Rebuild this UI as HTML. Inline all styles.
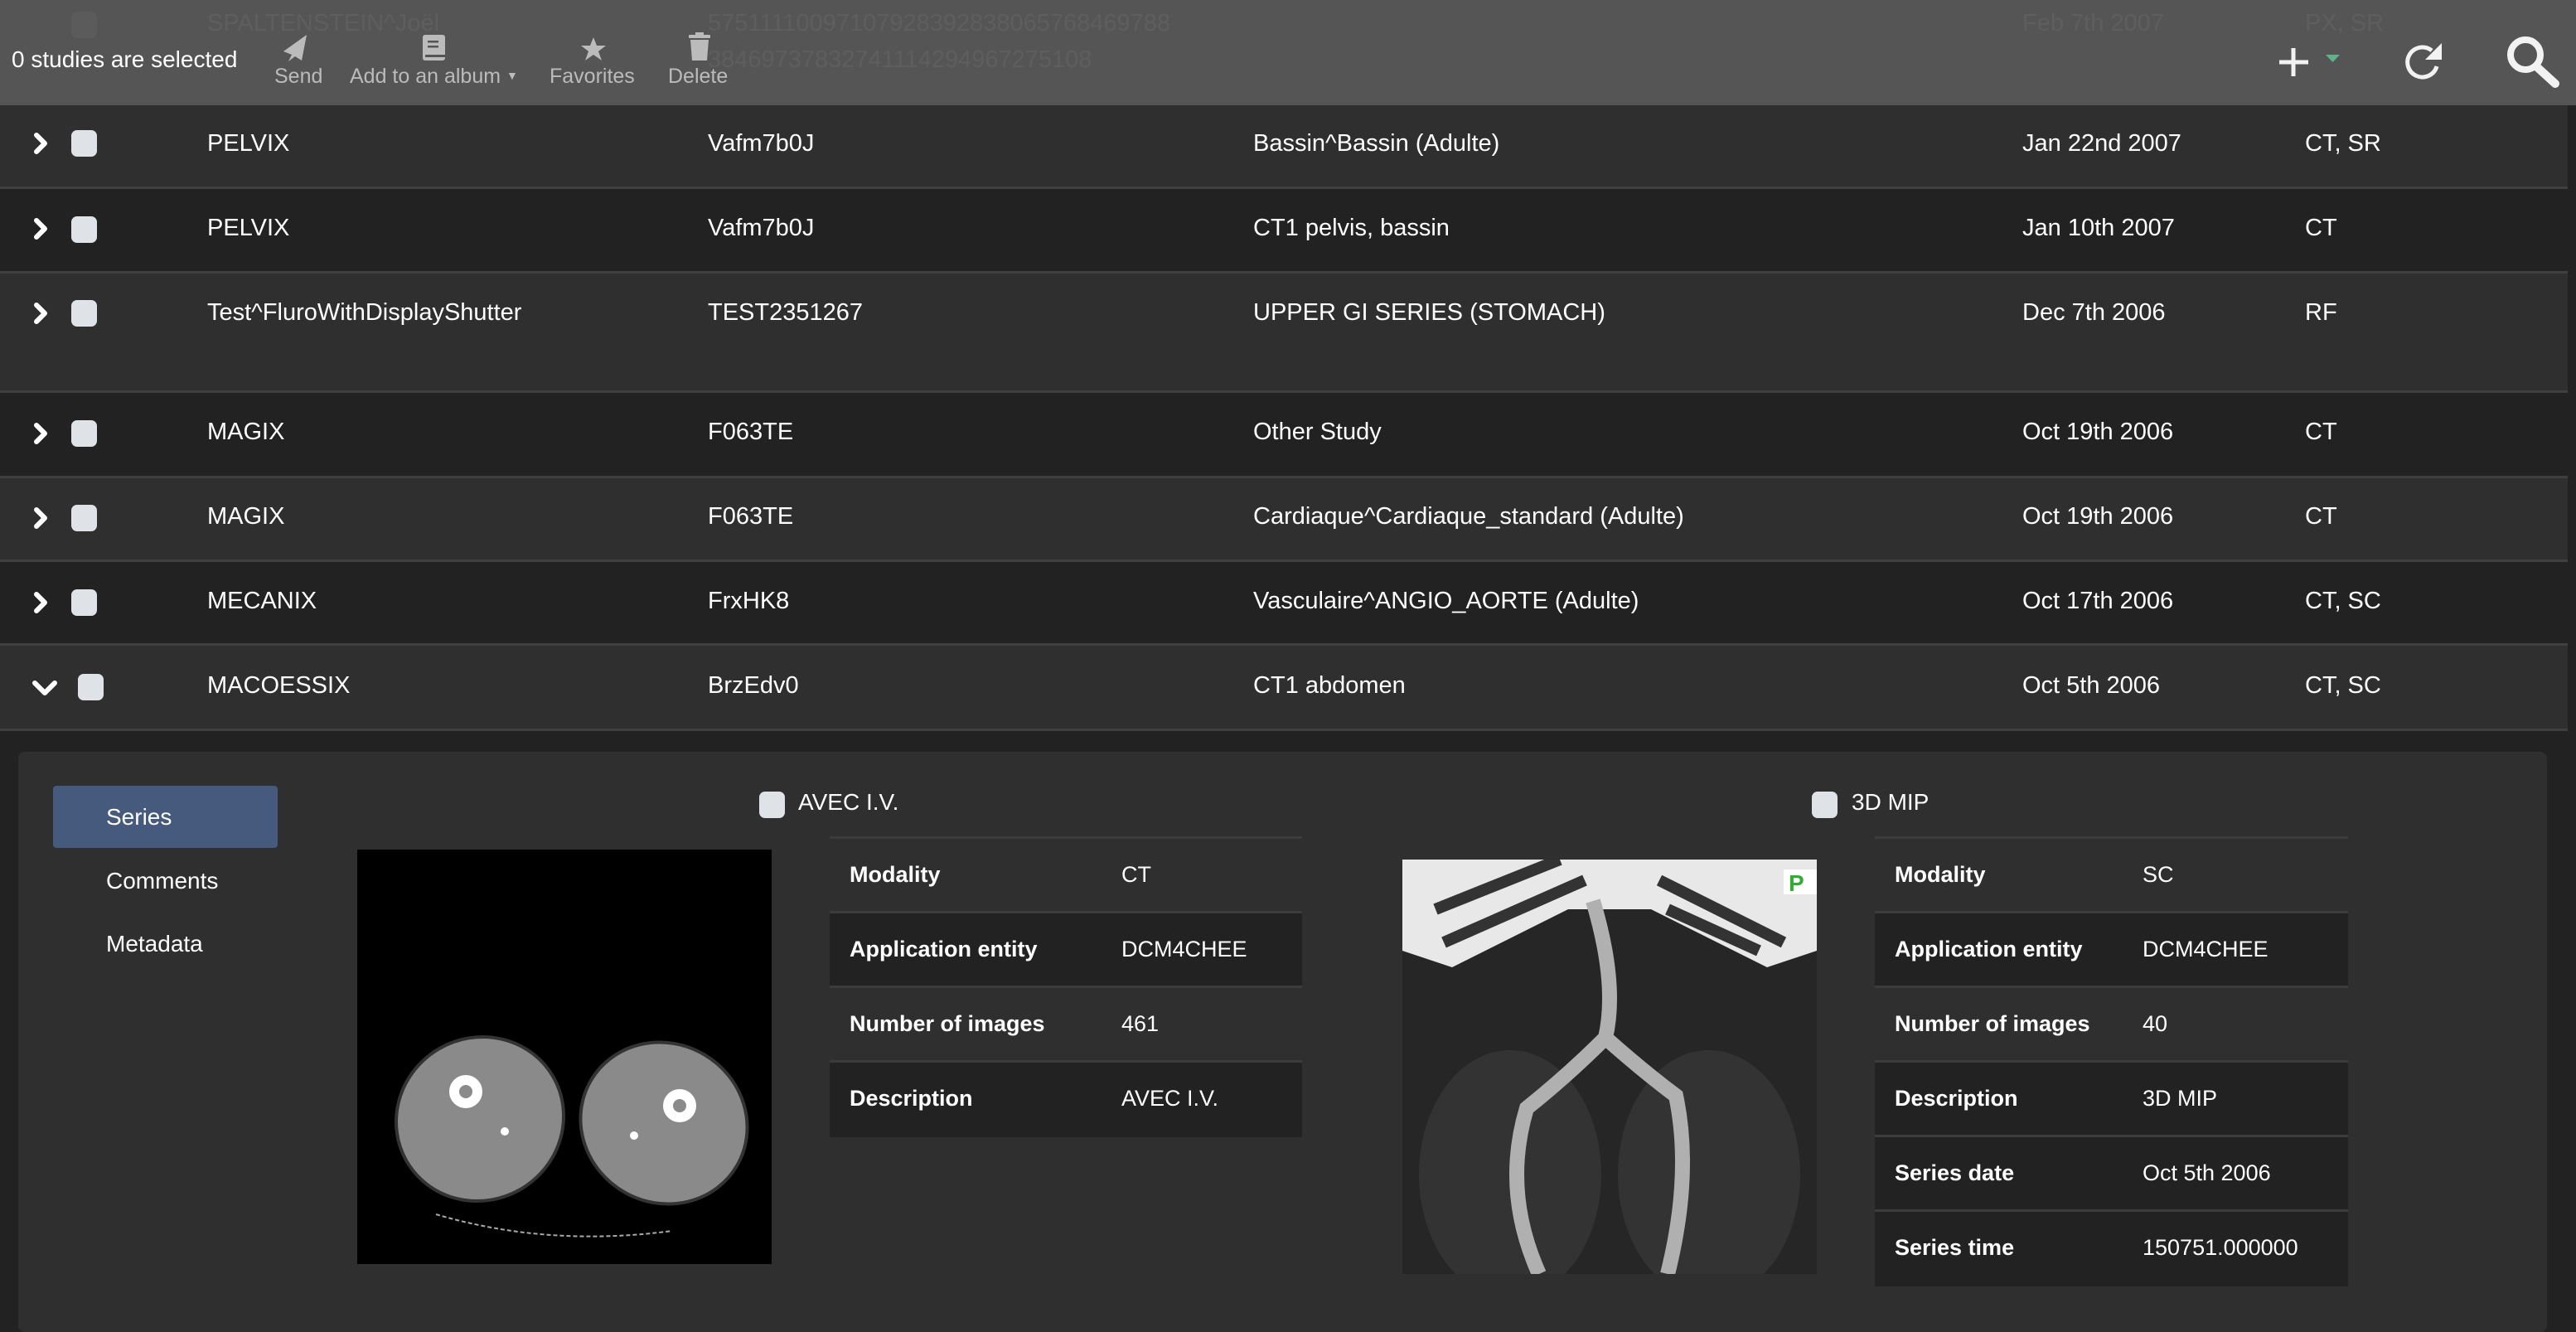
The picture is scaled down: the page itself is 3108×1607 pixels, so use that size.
<!DOCTYPE html>
<html><head><meta charset="utf-8"><style>
*{box-sizing:border-box;margin:0;padding:0}
body{width:3108px;height:1592px;background:#222;overflow:hidden;position:relative;font-family:"Liberation Sans",sans-serif;color:#fff}
.a{position:absolute;white-space:nowrap}
.row{position:absolute;left:0;width:3098px;border-bottom:3px solid #404040}
.l{background:#2f2f2f}.d{background:#222}
.t{position:absolute;font-size:29px;line-height:32px}
.cb{position:absolute;width:31px;height:32px;border-radius:7px;background:#dfe2e6}
.tb{position:absolute;border-top:3px solid #3c3c3c}
.tr{height:90px;border-bottom:3px solid #3c3c3c;position:relative;font-size:27px}
.tr b{position:absolute;top:28px}
.tr span{position:absolute;top:28px}
</style></head><body>
<div class="row l" style="top:0;height:127px"></div>
<div class="row l" style="top:127px;height:101px"></div>
<div class="row d" style="top:228px;height:102px"></div>
<div class="row l" style="top:330px;height:144px"></div>
<div class="row d" style="top:474px;height:103px"></div>
<div class="row l" style="top:577px;height:101px"></div>
<div class="row d" style="top:678px;height:101px"></div>
<div class="row l" style="top:779px;height:103px"></div>

<svg class="a" style="left:0;top:0" width="3108" height="882">
<g fill="none" stroke="#fff" stroke-width="6" stroke-linecap="round" stroke-linejoin="round">
<path d="M44 163 L54 173 L44 183"/>
<path d="M44 266 L54 276 L44 286"/>
<path d="M44 368 L54 378 L44 388"/>
<path d="M44 513 L54 523 L44 533"/>
<path d="M44 615 L54 625 L44 635"/>
<path d="M44 717 L54 727 L44 737"/>
<path d="M42 824 L54 836 L66 824"/>
</g>
</svg>
<div class="cb" style="left:86px;top:157px"></div>
<div class="cb" style="left:86px;top:261px"></div>
<div class="cb" style="left:86px;top:362px"></div>
<div class="cb" style="left:86px;top:507px"></div>
<div class="cb" style="left:86px;top:609px"></div>
<div class="cb" style="left:86px;top:711px"></div>
<div class="cb" style="left:94px;top:813px"></div>

<div class="t" style="left:250px;top:157px">PELVIX</div><div class="t" style="left:854px;top:157px">Vafm7b0J</div><div class="t" style="left:1512px;top:157px">Bassin^Bassin (Adulte)</div><div class="t" style="left:2440px;top:157px">Jan 22nd 2007</div><div class="t" style="left:2781px;top:157px">CT, SR</div>
<div class="t" style="left:250px;top:259px">PELVIX</div><div class="t" style="left:854px;top:259px">Vafm7b0J</div><div class="t" style="left:1512px;top:259px">CT1 pelvis, bassin</div><div class="t" style="left:2440px;top:259px">Jan 10th 2007</div><div class="t" style="left:2781px;top:259px">CT</div>
<div class="t" style="left:250px;top:361px">Test^FluroWithDisplayShutter</div><div class="t" style="left:854px;top:361px">TEST2351267</div><div class="t" style="left:1512px;top:361px">UPPER GI SERIES (STOMACH)</div><div class="t" style="left:2440px;top:361px">Dec 7th 2006</div><div class="t" style="left:2781px;top:361px">RF</div>
<div class="t" style="left:250px;top:505px">MAGIX</div><div class="t" style="left:854px;top:505px">F063TE</div><div class="t" style="left:1512px;top:505px">Other Study</div><div class="t" style="left:2440px;top:505px">Oct 19th 2006</div><div class="t" style="left:2781px;top:505px">CT</div>
<div class="t" style="left:250px;top:607px">MAGIX</div><div class="t" style="left:854px;top:607px">F063TE</div><div class="t" style="left:1512px;top:607px">Cardiaque^Cardiaque_standard (Adulte)</div><div class="t" style="left:2440px;top:607px">Oct 19th 2006</div><div class="t" style="left:2781px;top:607px">CT</div>
<div class="t" style="left:250px;top:709px">MECANIX</div><div class="t" style="left:854px;top:709px">FrxHK8</div><div class="t" style="left:1512px;top:709px">Vasculaire^ANGIO_AORTE (Adulte)</div><div class="t" style="left:2440px;top:709px">Oct 17th 2006</div><div class="t" style="left:2781px;top:709px">CT, SC</div>
<div class="t" style="left:250px;top:811px">MACOESSIX</div><div class="t" style="left:854px;top:811px">BrzEdv0</div><div class="t" style="left:1512px;top:811px">CT1 abdomen</div><div class="t" style="left:2440px;top:811px">Oct 5th 2006</div><div class="t" style="left:2781px;top:811px">CT, SC</div>

<div class="a" style="left:0;top:0;width:3108px;height:127px;background:#555"></div>
<div class="a" style="left:0;top:0;width:3108px;height:127px;color:#5e5e5e;font-size:29px">
 <div class="a" style="left:86px;top:14px;width:31px;height:32px;border-radius:7px;background:#5b5b5b"></div>
 <div class="a" style="left:250px;top:12px">SPALTENSTEIN^Joël</div>
 <div class="a" style="left:854px;top:12px">57511110097107928392838065768469788</div>
 <div class="a" style="left:854px;top:56px">38469737832741114294967275108</div>
 <div class="a" style="left:2440px;top:12px">Feb 7th 2007</div>
 <div class="a" style="left:2781px;top:12px">PX, SR</div>
</div>
<div class="a" style="left:14px;top:56px;font-size:28px;color:#fff">0 studies are selected</div>
<div class="a" style="color:#bbb;font-size:25px;top:78px;left:331px">Send</div>
<div class="a" style="color:#bbb;font-size:25px;top:78px;left:422px">Add to an album <span style="font-size:14px;vertical-align:4px">▼</span></div>
<div class="a" style="color:#bbb;font-size:25px;top:78px;left:663px">Favorites</div>
<div class="a" style="color:#bbb;font-size:25px;top:78px;left:806px">Delete</div>
<svg class="a" style="left:0;top:0" width="3108" height="127">
<path d="M370 42 L342 62 L352 66 L348 74 L356 68 L364 73 Z" fill="#bbb"/>
<rect x="510" y="42" width="27" height="31" rx="3" fill="#bbb"/><rect x="516" y="49" width="13" height="2.5" fill="#555"/><rect x="516" y="55" width="13" height="2.5" fill="#555"/><rect x="513" y="66" width="24" height="3" fill="#555"/>
<path d="M716 45 L720 55 L731 55 L722 62 L726 73 L716 66 L706 73 L710 62 L701 55 L712 55 Z" fill="#bbb"/>
<rect x="831" y="42" width="26" height="4" rx="1" fill="#bbb"/><rect x="839" y="39" width="10" height="4" fill="#bbb"/><path d="M833 48 L855 48 L853 73 L835 73 Z" fill="#bbb"/>
<path d="M2767 58 V92 M2750 75 H2785" stroke="#f2f2f2" stroke-width="5"/>
<path d="M2806 66 L2823 66 L2814.5 75 Z" fill="#5fb38a"/>
<path d="M2940 80 A18 18 0 1 1 2934 61" fill="none" stroke="#f2f2f2" stroke-width="5"/>
<path d="M2946 52 L2946 72 L2926 72 Z" fill="#f2f2f2"/>
<circle cx="3047" cy="66" r="18" fill="none" stroke="#f2f2f2" stroke-width="8"/>
<path d="M3060 80 L3083 101" stroke="#f2f2f2" stroke-width="10" stroke-linecap="round"/>
</svg>

<div class="a" style="left:22px;top:907px;width:3051px;height:700px;background:#2f2f2f;border-radius:8px"></div>
<div class="a" style="left:64px;top:948px;width:271px;height:75px;background:#455a7c;border-radius:4px"></div>
<div class="a" style="left:128px;top:970px;font-size:28px">Series</div>
<div class="a" style="left:128px;top:1047px;font-size:28px">Comments</div>
<div class="a" style="left:128px;top:1123px;font-size:28px">Metadata</div>

<div class="cb" style="left:916px;top:955px"></div>
<div class="a" style="left:963px;top:952px;font-size:28px">AVEC I.V.</div>
<div class="cb" style="left:2186px;top:955px"></div>
<div class="a" style="left:2234px;top:952px;font-size:28px">3D MIP</div>

<svg class="a" style="left:431px;top:1025px" width="500" height="500">
<rect width="500" height="500" fill="#000"/>
<ellipse cx="148" cy="325" rx="102" ry="98" fill="#8a8a8a" stroke="#333" stroke-width="4" transform="rotate(-30 148 325)"/>
<ellipse cx="370" cy="330" rx="102" ry="96" fill="#8a8a8a" stroke="#333" stroke-width="4" transform="rotate(30 370 330)"/>
<circle cx="131" cy="292" r="14" fill="none" stroke="#fff" stroke-width="12"/>
<circle cx="389" cy="309" r="14" fill="none" stroke="#fff" stroke-width="12"/>
<circle cx="178" cy="340" r="5" fill="#fff"/><circle cx="334" cy="345" r="5" fill="#fff"/>
<path d="M95 440 Q230 480 380 460" stroke="#aaa" stroke-width="2" fill="none" stroke-dasharray="5 3"/>
</svg>

<svg class="a" style="left:1692px;top:1037px" width="500" height="500">
<rect width="500" height="500" fill="#262626"/>
<ellipse cx="130" cy="380" rx="110" ry="150" fill="#333"/>
<ellipse cx="370" cy="380" rx="110" ry="150" fill="#333"/>
<path d="M0 0 H500 V110 L440 130 L300 60 L200 60 L60 130 L0 110 Z" fill="#e8e8e8"/>
<path d="M40 60 L190 0 M50 100 L220 25 M310 25 L460 100 M320 60 L430 110" stroke="#333" stroke-width="14"/>
<path d="M230 50 Q260 150 245 215 Q200 260 150 300 Q120 400 165 500 M245 215 Q290 255 330 285 Q350 380 320 500" stroke="#b0b0b0" stroke-width="18" fill="none"/>
<rect x="460" y="12" width="40" height="30" fill="#fff"/><text x="466" y="38" font-size="28" fill="#3a3" font-family="Liberation Sans" font-weight="bold">P</text>
</svg>

<div class="tb" style="left:1001px;top:1009px;width:570px">
 <div class="tr"><b style="left:24px">Modality</b><span style="left:352px">CT</span></div>
 <div class="tr d"><b style="left:24px">Application entity</b><span style="left:352px">DCM4CHEE</span></div>
 <div class="tr"><b style="left:24px">Number of images</b><span style="left:352px">461</span></div>
 <div class="tr d" style="border:none"><b style="left:24px">Description</b><span style="left:352px">AVEC I.V.</span></div>
</div>
<div class="tb" style="left:2262px;top:1009px;width:571px">
 <div class="tr"><b style="left:24px">Modality</b><span style="left:323px">SC</span></div>
 <div class="tr d"><b style="left:24px">Application entity</b><span style="left:323px">DCM4CHEE</span></div>
 <div class="tr"><b style="left:24px">Number of images</b><span style="left:323px">40</span></div>
 <div class="tr d"><b style="left:24px">Description</b><span style="left:323px">3D MIP</span></div>
 <div class="tr d"><b style="left:24px">Series date</b><span style="left:323px">Oct 5th 2006</span></div>
 <div class="tr d" style="border:none"><b style="left:24px">Series time</b><span style="left:323px">150751.000000</span></div>
</div>
</body></html>
